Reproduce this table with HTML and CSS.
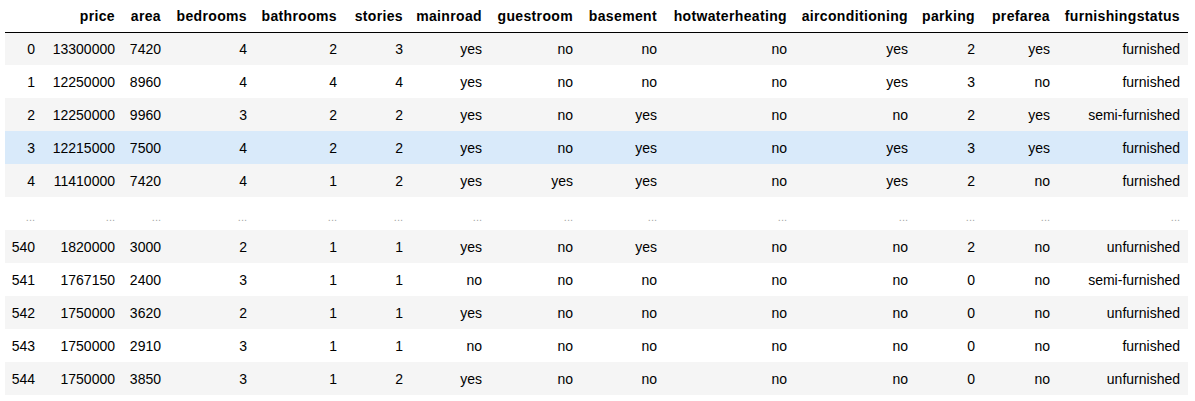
FILE: index.html
```html
<!DOCTYPE html>
<html>
<head>
<meta charset="utf-8">
<link rel="stylesheet" href="styles.css">
</head>
<body>
<div class="wrap">
<table class="df">
<colgroup>
<col class="w-idx"><col class="w-price"><col class="w-area"><col class="w-bed"><col class="w-bath"><col class="w-sto"><col class="w-main"><col class="w-guest"><col class="w-base"><col class="w-hot"><col class="w-air"><col class="w-park"><col class="w-pref"><col class="w-furn">
</colgroup>
<thead>
<tr><th></th><th>price</th><th>area</th><th>bedrooms</th><th>bathrooms</th><th>stories</th><th>mainroad</th><th>guestroom</th><th>basement</th><th>hotwaterheating</th><th>airconditioning</th><th>parking</th><th>prefarea</th><th>furnishingstatus</th></tr>
</thead>
<tbody>
<tr class="odd"><td>0</td><td>13300000</td><td>7420</td><td>4</td><td>2</td><td>3</td><td>yes</td><td>no</td><td>no</td><td>no</td><td>yes</td><td>2</td><td>yes</td><td>furnished</td></tr>
<tr><td>1</td><td>12250000</td><td>8960</td><td>4</td><td>4</td><td>4</td><td>yes</td><td>no</td><td>no</td><td>no</td><td>yes</td><td>3</td><td>no</td><td>furnished</td></tr>
<tr class="odd"><td>2</td><td>12250000</td><td>9960</td><td>3</td><td>2</td><td>2</td><td>yes</td><td>no</td><td>yes</td><td>no</td><td>no</td><td>2</td><td>yes</td><td>semi-furnished</td></tr>
<tr class="hover"><td>3</td><td>12215000</td><td>7500</td><td>4</td><td>2</td><td>2</td><td>yes</td><td>no</td><td>yes</td><td>no</td><td>yes</td><td>3</td><td>yes</td><td>furnished</td></tr>
<tr class="odd"><td>4</td><td>11410000</td><td>7420</td><td>4</td><td>1</td><td>2</td><td>yes</td><td>yes</td><td>yes</td><td>no</td><td>yes</td><td>2</td><td>no</td><td>furnished</td></tr>
<tr class="dots"><td>...</td><td>...</td><td>...</td><td>...</td><td>...</td><td>...</td><td>...</td><td>...</td><td>...</td><td>...</td><td>...</td><td>...</td><td>...</td><td>...</td></tr>
<tr class="odd"><td>540</td><td>1820000</td><td>3000</td><td>2</td><td>1</td><td>1</td><td>yes</td><td>no</td><td>yes</td><td>no</td><td>no</td><td>2</td><td>no</td><td>unfurnished</td></tr>
<tr><td>541</td><td>1767150</td><td>2400</td><td>3</td><td>1</td><td>1</td><td>no</td><td>no</td><td>no</td><td>no</td><td>no</td><td>0</td><td>no</td><td>semi-furnished</td></tr>
<tr class="odd"><td>542</td><td>1750000</td><td>3620</td><td>2</td><td>1</td><td>1</td><td>yes</td><td>no</td><td>no</td><td>no</td><td>no</td><td>0</td><td>no</td><td>unfurnished</td></tr>
<tr><td>543</td><td>1750000</td><td>2910</td><td>3</td><td>1</td><td>1</td><td>no</td><td>no</td><td>no</td><td>no</td><td>no</td><td>0</td><td>no</td><td>furnished</td></tr>
<tr class="odd"><td>544</td><td>1750000</td><td>3850</td><td>3</td><td>1</td><td>2</td><td>yes</td><td>no</td><td>no</td><td>no</td><td>no</td><td>0</td><td>no</td><td>unfurnished</td></tr>
</tbody>
</table>
</div>
</body>
</html>
```

FILE: styles.css
```css
html, body {
  margin: 0;
  padding: 0;
  background: #ffffff;
}
.wrap {
  padding: 0 0 0 5px;
}
.df {
  table-layout: fixed;
  width: 1183px;
  border-collapse: collapse;
  border-spacing: 0;
  font-family: Arial, "Liberation Sans", sans-serif;
  font-size: 14px;
  color: #000;
}
.w-idx { width: 38px; }
.w-price { width: 80px; }
.w-area { width: 46px; }
.w-bed { width: 86px; }
.w-bath { width: 90px; }
.w-sto { width: 66px; }
.w-main { width: 79px; }
.w-guest { width: 91px; }
.w-base { width: 84px; }
.w-hot { width: 130px; }
.w-air { width: 121px; }
.w-park { width: 67px; }
.w-pref { width: 75px; }
.w-furn { width: 130px; }
.df th, .df td {
  text-align: right;
  padding: 0 8px 0 0;
  white-space: nowrap;
  vertical-align: middle;
}
.df thead tr {
  height: 32px;
}
.df thead th {
  font-weight: bold;
  letter-spacing: 0.35px;
  border-bottom: 1px solid #000;
}
.df tbody tr {
  height: 33px;
}
.df tbody tr.odd {
  background: #f5f5f5;
}
.df tbody tr.hover {
  background: #d9eafa;
}
.df tbody tr.dots td {
  color: #a8a8a8;
  font-size: 11px;
  padding-top: 6px;
}
```
